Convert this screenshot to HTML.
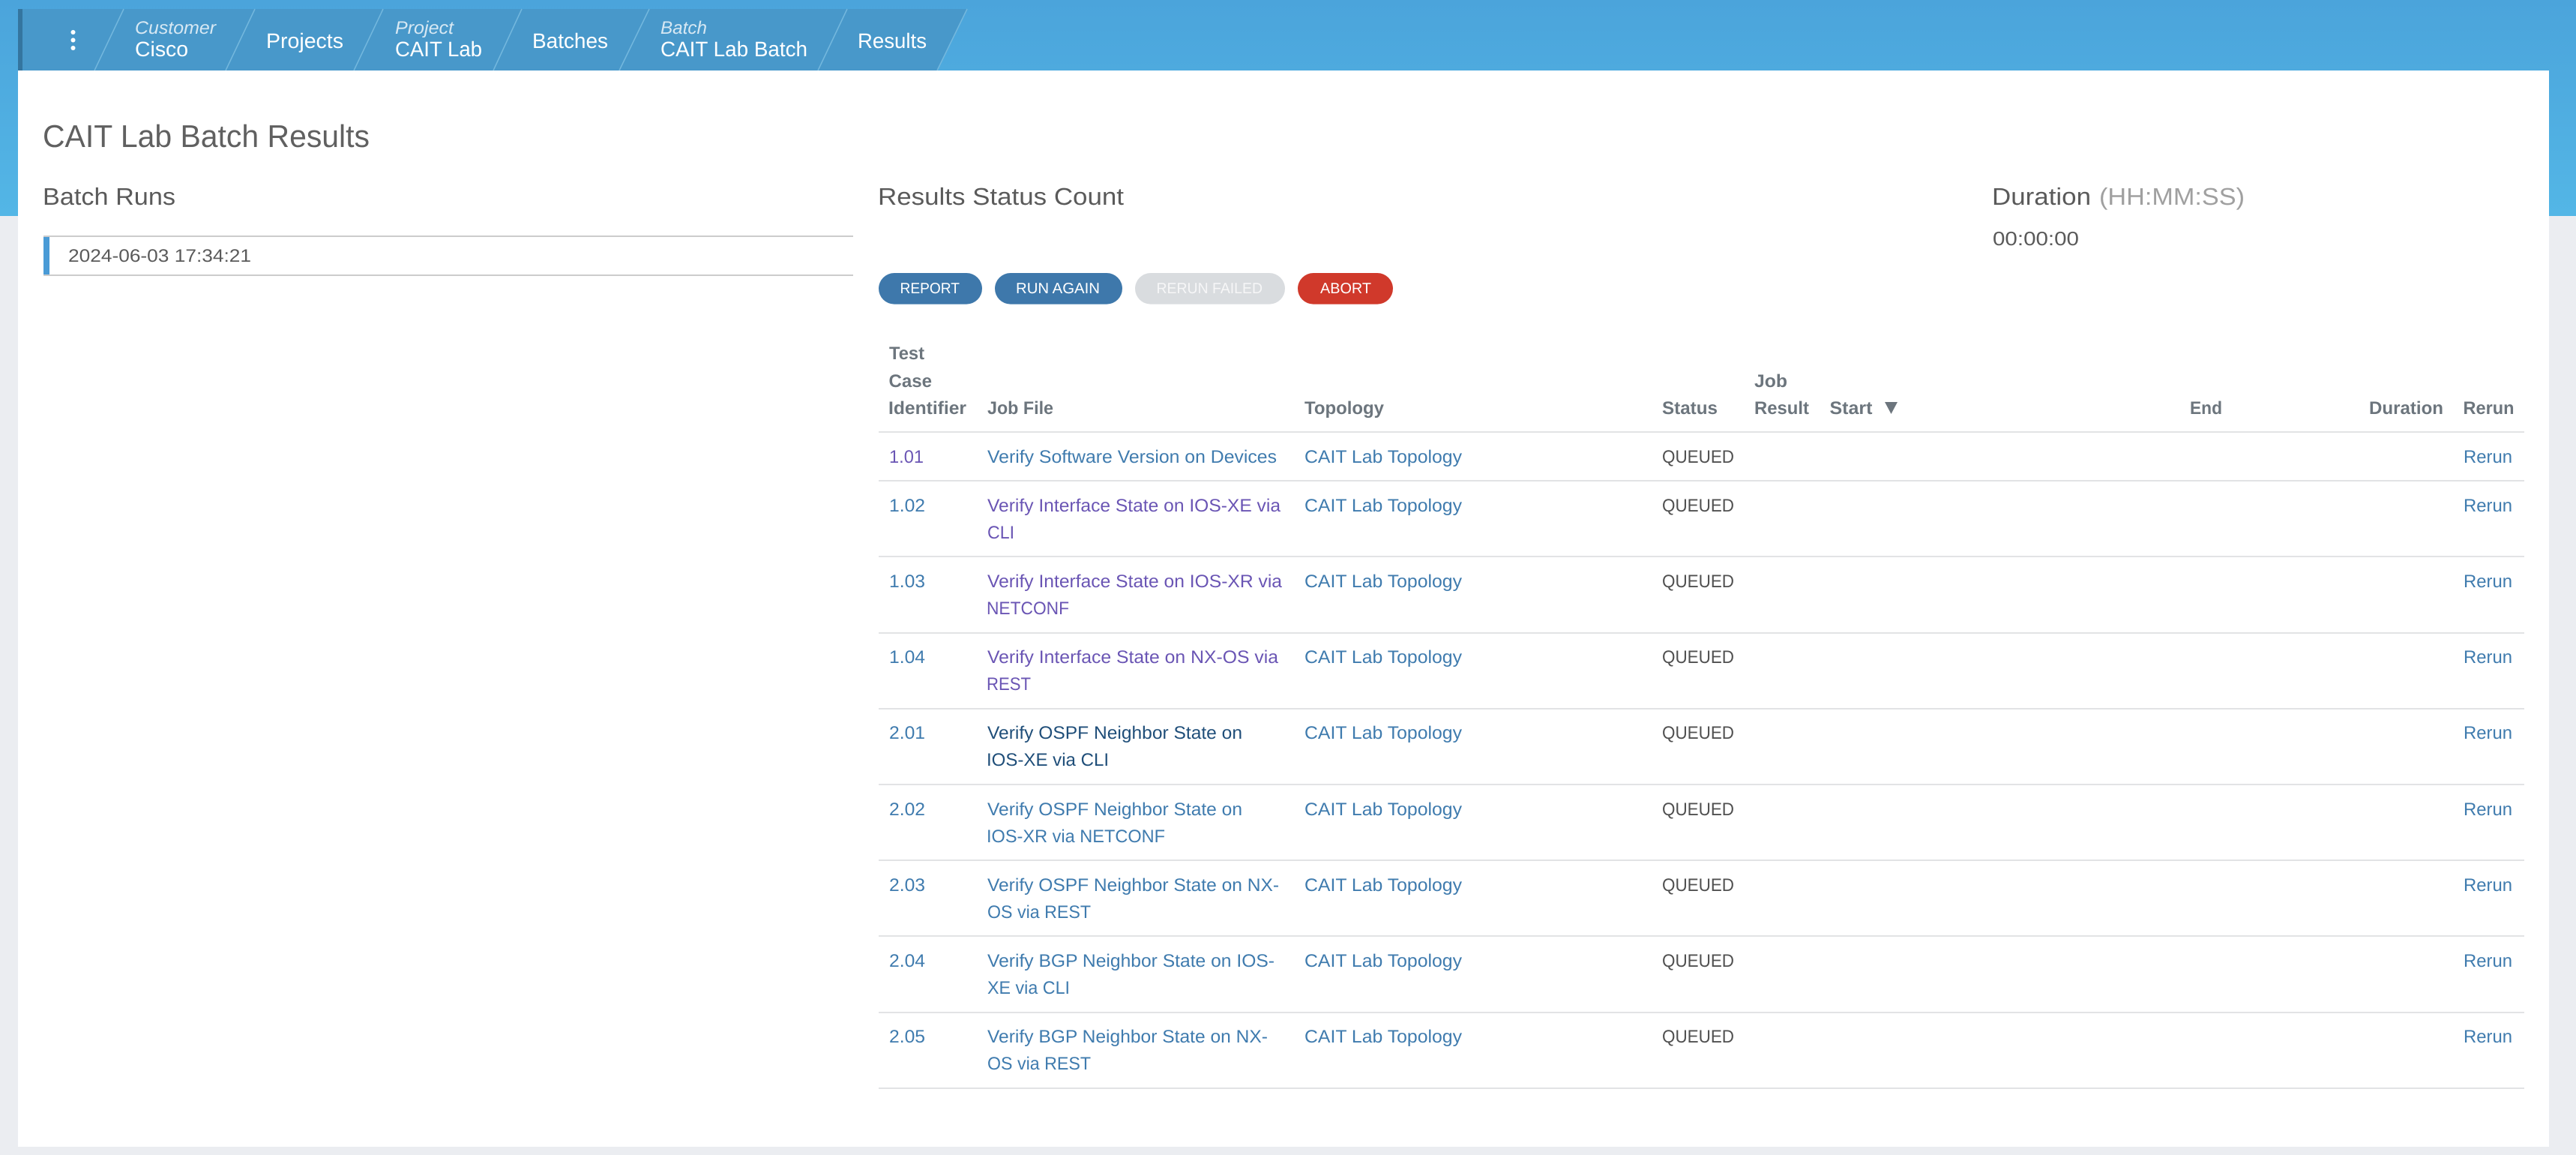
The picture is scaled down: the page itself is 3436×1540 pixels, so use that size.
<!DOCTYPE html>
<html><head><meta charset="utf-8"><title>CAIT Lab Batch Results</title>
<style>
html,body{margin:0;padding:0;width:3436px;height:1540px;overflow:hidden;background:#ebedf1}
svg{display:block}
text{font-family:"Liberation Sans",sans-serif;font-size:24px;fill:#3f7bae;text-rendering:geometricPrecision}
.b{fill:#fff;font-size:28px}
.i{fill:#fff;fill-opacity:.78;font-size:24px;font-style:italic}
.h{fill:#5a5a5a;font-size:32px}
.th{fill:#6c757d;font-weight:bold;font-size:24px}
.p{fill:#6a55b4}
.d{fill:#1f4e79}
.q{fill:#505050}
.btn{fill:#fff;font-size:20px}
.r{fill:#e2e3e5}
</style></head><body>
<svg width="3436" height="1540" viewBox="0 0 3436 1540" xmlns="http://www.w3.org/2000/svg">
<defs><linearGradient id="g" x1="0" y1="0" x2="0" y2="1"><stop offset="0" stop-color="#4ba4db"/><stop offset="1" stop-color="#53b6e6"/></linearGradient></defs>
<rect width="3436" height="1540" fill="#ebedf1"/>
<rect width="3436" height="288" fill="url(#g)"/>
<polygon points="24,12 1290,12 1250,94 24,94" fill="#4898ca"/>
<rect x="24" y="12" width="6" height="82" fill="#34759f"/>
<g stroke="#74b8de" stroke-width="1.5" fill="none">
<path d="M126 94L165 12M301 94L340 12M472 94L511 12M658 94L696 12M826 94L866 12M1091 94L1130 12M1250 94L1290 12"/>
</g>
<circle cx="97.5" cy="43" r="3" fill="#fff"/><circle cx="97.5" cy="53.5" r="3" fill="#fff"/><circle cx="97.5" cy="64" r="3" fill="#fff"/>
<text class="i" x="180" y="45" textLength="108" lengthAdjust="spacingAndGlyphs">Customer</text>
<text class="b" x="180" y="75" textLength="71" lengthAdjust="spacingAndGlyphs">Cisco</text>
<text class="b" x="355" y="64" textLength="103" lengthAdjust="spacingAndGlyphs">Projects</text>
<text class="i" x="527" y="45" textLength="78" lengthAdjust="spacingAndGlyphs">Project</text>
<text class="b" x="527" y="75" textLength="116" lengthAdjust="spacingAndGlyphs">CAIT Lab</text>
<text class="b" x="710" y="64" textLength="101" lengthAdjust="spacingAndGlyphs">Batches</text>
<text class="i" x="881" y="45" textLength="62" lengthAdjust="spacingAndGlyphs">Batch</text>
<text class="b" x="881" y="75" textLength="196" lengthAdjust="spacingAndGlyphs">CAIT Lab Batch</text>
<text class="b" x="1144" y="64" textLength="92" lengthAdjust="spacingAndGlyphs">Results</text>
<rect x="24" y="94" width="3376" height="1435" fill="#fff"/>
<text x="57" y="196" textLength="436" lengthAdjust="spacingAndGlyphs" style="font-size:42px;fill:#606060">CAIT Lab Batch Results</text>
<text class="h" x="57" y="273" textLength="177" lengthAdjust="spacingAndGlyphs">Batch Runs</text>
<rect x="58" y="314" width="1080" height="2" fill="#ccc"/>
<rect x="58" y="366" width="1080" height="2" fill="#ccc"/>
<rect x="58" y="316" width="8" height="50" fill="#4a9bd6"/>
<text x="91" y="349" textLength="244" lengthAdjust="spacingAndGlyphs" style="fill:#5a5a5a">2024-06-03 17:34:21</text>
<text class="h" x="1171" y="273" textLength="328" lengthAdjust="spacingAndGlyphs">Results Status Count</text>
<text class="h" x="2657" y="273" textLength="132" lengthAdjust="spacingAndGlyphs">Duration</text>
<text class="h" x="2800" y="273" textLength="194" lengthAdjust="spacingAndGlyphs" style="fill:#a0a0a0">(HH:MM:SS)</text>
<text x="2658" y="327" textLength="115" lengthAdjust="spacingAndGlyphs" style="font-size:26px;fill:#5a5a5a">00:00:00</text>
<rect x="1172" y="364" width="138" height="41.6" rx="20.8" fill="#3e78ab"/>
<rect x="1327" y="364" width="170" height="41.6" rx="20.8" fill="#3e78ab"/>
<rect x="1514" y="364" width="200" height="41.6" rx="20.8" fill="#d9dcdf"/>
<rect x="1731" y="364" width="127" height="41.6" rx="20.8" fill="#d0392b"/>
<text class="btn" x="1200.5" y="391" textLength="79.5" lengthAdjust="spacingAndGlyphs">REPORT</text>
<text class="btn" x="1355" y="391" textLength="112" lengthAdjust="spacingAndGlyphs">RUN AGAIN</text>
<text class="btn" x="1542.5" y="391" textLength="141.5" lengthAdjust="spacingAndGlyphs" style="fill-opacity:.75">RERUN FAILED</text>
<text class="btn" x="1761" y="391" textLength="68" lengthAdjust="spacingAndGlyphs">ABORT</text>
<text class="th" x="1186" y="479" textLength="47" lengthAdjust="spacingAndGlyphs">Test</text>
<text class="th" x="1185.5" y="516" textLength="57.5" lengthAdjust="spacingAndGlyphs">Case</text>
<text class="th" x="1185" y="552" textLength="104" lengthAdjust="spacingAndGlyphs">Identifier</text>
<text class="th" x="1317" y="552" textLength="88" lengthAdjust="spacingAndGlyphs">Job File</text>
<text class="th" x="1740" y="552" textLength="106" lengthAdjust="spacingAndGlyphs">Topology</text>
<text class="th" x="2217" y="552" textLength="74" lengthAdjust="spacingAndGlyphs">Status</text>
<text class="th" x="2340" y="516" textLength="44" lengthAdjust="spacingAndGlyphs">Job</text>
<text class="th" x="2340" y="552" textLength="73" lengthAdjust="spacingAndGlyphs">Result</text>
<text class="th" x="2440.5" y="552" textLength="57" lengthAdjust="spacingAndGlyphs">Start</text>
<polygon points="2514,536 2531,536 2522.5,552" fill="#6c757d"/>
<text class="th" x="2921" y="552" textLength="43" lengthAdjust="spacingAndGlyphs">End</text>
<text class="th" x="3160" y="552" textLength="99" lengthAdjust="spacingAndGlyphs">Duration</text>
<text class="th" x="3285.5" y="552" textLength="68" lengthAdjust="spacingAndGlyphs">Rerun</text>
<rect class="r" x="1172" y="575" width="2195" height="2"/>
<rect class="r" x="1172" y="640" width="2195" height="2"/>
<rect class="r" x="1172" y="741" width="2195" height="2"/>
<rect class="r" x="1172" y="843" width="2195" height="2"/>
<rect class="r" x="1172" y="944" width="2195" height="2"/>
<rect class="r" x="1172" y="1045" width="2195" height="2"/>
<rect class="r" x="1172" y="1146" width="2195" height="2"/>
<rect class="r" x="1172" y="1247" width="2195" height="2"/>
<rect class="r" x="1172" y="1349" width="2195" height="2"/>
<rect class="r" x="1172" y="1450" width="2195" height="2"/>

<text class="p" x="1186" y="617" textLength="46" lengthAdjust="spacingAndGlyphs">1.01</text>
<text x="1317" y="617" textLength="386" lengthAdjust="spacingAndGlyphs">Verify Software Version on Devices</text>
<text x="1740" y="617" textLength="210" lengthAdjust="spacingAndGlyphs">CAIT Lab Topology</text>
<text class="q" x="2217" y="617" textLength="96" lengthAdjust="spacingAndGlyphs">QUEUED</text>
<text x="3286" y="617" textLength="65" lengthAdjust="spacingAndGlyphs">Rerun</text>

<text x="1186" y="682" textLength="48" lengthAdjust="spacingAndGlyphs">1.02</text>
<text class="p" x="1317" y="682" textLength="391" lengthAdjust="spacingAndGlyphs">Verify Interface State on IOS-XE via</text>
<text class="p" x="1317" y="718" textLength="36" lengthAdjust="spacingAndGlyphs">CLI</text>
<text x="1740" y="682" textLength="210" lengthAdjust="spacingAndGlyphs">CAIT Lab Topology</text>
<text class="q" x="2217" y="682" textLength="96" lengthAdjust="spacingAndGlyphs">QUEUED</text>
<text x="3286" y="682" textLength="65" lengthAdjust="spacingAndGlyphs">Rerun</text>

<text x="1186" y="783" textLength="48" lengthAdjust="spacingAndGlyphs">1.03</text>
<text class="p" x="1317" y="783" textLength="393" lengthAdjust="spacingAndGlyphs">Verify Interface State on IOS-XR via</text>
<text class="p" x="1316" y="819" textLength="110" lengthAdjust="spacingAndGlyphs">NETCONF</text>
<text x="1740" y="783" textLength="210" lengthAdjust="spacingAndGlyphs">CAIT Lab Topology</text>
<text class="q" x="2217" y="783" textLength="96" lengthAdjust="spacingAndGlyphs">QUEUED</text>
<text x="3286" y="783" textLength="65" lengthAdjust="spacingAndGlyphs">Rerun</text>

<text x="1186" y="884" textLength="48" lengthAdjust="spacingAndGlyphs">1.04</text>
<text class="p" x="1317" y="884" textLength="388" lengthAdjust="spacingAndGlyphs">Verify Interface State on NX-OS via</text>
<text class="p" x="1316" y="920" textLength="59" lengthAdjust="spacingAndGlyphs">REST</text>
<text x="1740" y="884" textLength="210" lengthAdjust="spacingAndGlyphs">CAIT Lab Topology</text>
<text class="q" x="2217" y="884" textLength="96" lengthAdjust="spacingAndGlyphs">QUEUED</text>
<text x="3286" y="884" textLength="65" lengthAdjust="spacingAndGlyphs">Rerun</text>

<text x="1186" y="985" textLength="48" lengthAdjust="spacingAndGlyphs">2.01</text>
<text class="d" x="1317" y="985" textLength="340" lengthAdjust="spacingAndGlyphs">Verify OSPF Neighbor State on</text>
<text class="d" x="1316" y="1021" textLength="163" lengthAdjust="spacingAndGlyphs">IOS-XE via CLI</text>
<text x="1740" y="985" textLength="210" lengthAdjust="spacingAndGlyphs">CAIT Lab Topology</text>
<text class="q" x="2217" y="985" textLength="96" lengthAdjust="spacingAndGlyphs">QUEUED</text>
<text x="3286" y="985" textLength="65" lengthAdjust="spacingAndGlyphs">Rerun</text>

<text x="1186" y="1087" textLength="48" lengthAdjust="spacingAndGlyphs">2.02</text>
<text x="1317" y="1087" textLength="340" lengthAdjust="spacingAndGlyphs">Verify OSPF Neighbor State on</text>
<text x="1316" y="1123" textLength="238" lengthAdjust="spacingAndGlyphs">IOS-XR via NETCONF</text>
<text x="1740" y="1087" textLength="210" lengthAdjust="spacingAndGlyphs">CAIT Lab Topology</text>
<text class="q" x="2217" y="1087" textLength="96" lengthAdjust="spacingAndGlyphs">QUEUED</text>
<text x="3286" y="1087" textLength="65" lengthAdjust="spacingAndGlyphs">Rerun</text>

<text x="1186" y="1188" textLength="48" lengthAdjust="spacingAndGlyphs">2.03</text>
<text x="1317" y="1188" textLength="389" lengthAdjust="spacingAndGlyphs">Verify OSPF Neighbor State on NX-</text>
<text x="1317" y="1224" textLength="138" lengthAdjust="spacingAndGlyphs">OS via REST</text>
<text x="1740" y="1188" textLength="210" lengthAdjust="spacingAndGlyphs">CAIT Lab Topology</text>
<text class="q" x="2217" y="1188" textLength="96" lengthAdjust="spacingAndGlyphs">QUEUED</text>
<text x="3286" y="1188" textLength="65" lengthAdjust="spacingAndGlyphs">Rerun</text>

<text x="1186" y="1289" textLength="48" lengthAdjust="spacingAndGlyphs">2.04</text>
<text x="1317" y="1289" textLength="383" lengthAdjust="spacingAndGlyphs">Verify BGP Neighbor State on IOS-</text>
<text x="1317" y="1325" textLength="110" lengthAdjust="spacingAndGlyphs">XE via CLI</text>
<text x="1740" y="1289" textLength="210" lengthAdjust="spacingAndGlyphs">CAIT Lab Topology</text>
<text class="q" x="2217" y="1289" textLength="96" lengthAdjust="spacingAndGlyphs">QUEUED</text>
<text x="3286" y="1289" textLength="65" lengthAdjust="spacingAndGlyphs">Rerun</text>

<text x="1186" y="1390" textLength="48" lengthAdjust="spacingAndGlyphs">2.05</text>
<text x="1317" y="1390" textLength="374" lengthAdjust="spacingAndGlyphs">Verify BGP Neighbor State on NX-</text>
<text x="1317" y="1426" textLength="138" lengthAdjust="spacingAndGlyphs">OS via REST</text>
<text x="1740" y="1390" textLength="210" lengthAdjust="spacingAndGlyphs">CAIT Lab Topology</text>
<text class="q" x="2217" y="1390" textLength="96" lengthAdjust="spacingAndGlyphs">QUEUED</text>
<text x="3286" y="1390" textLength="65" lengthAdjust="spacingAndGlyphs">Rerun</text>
</svg>
</body></html>
